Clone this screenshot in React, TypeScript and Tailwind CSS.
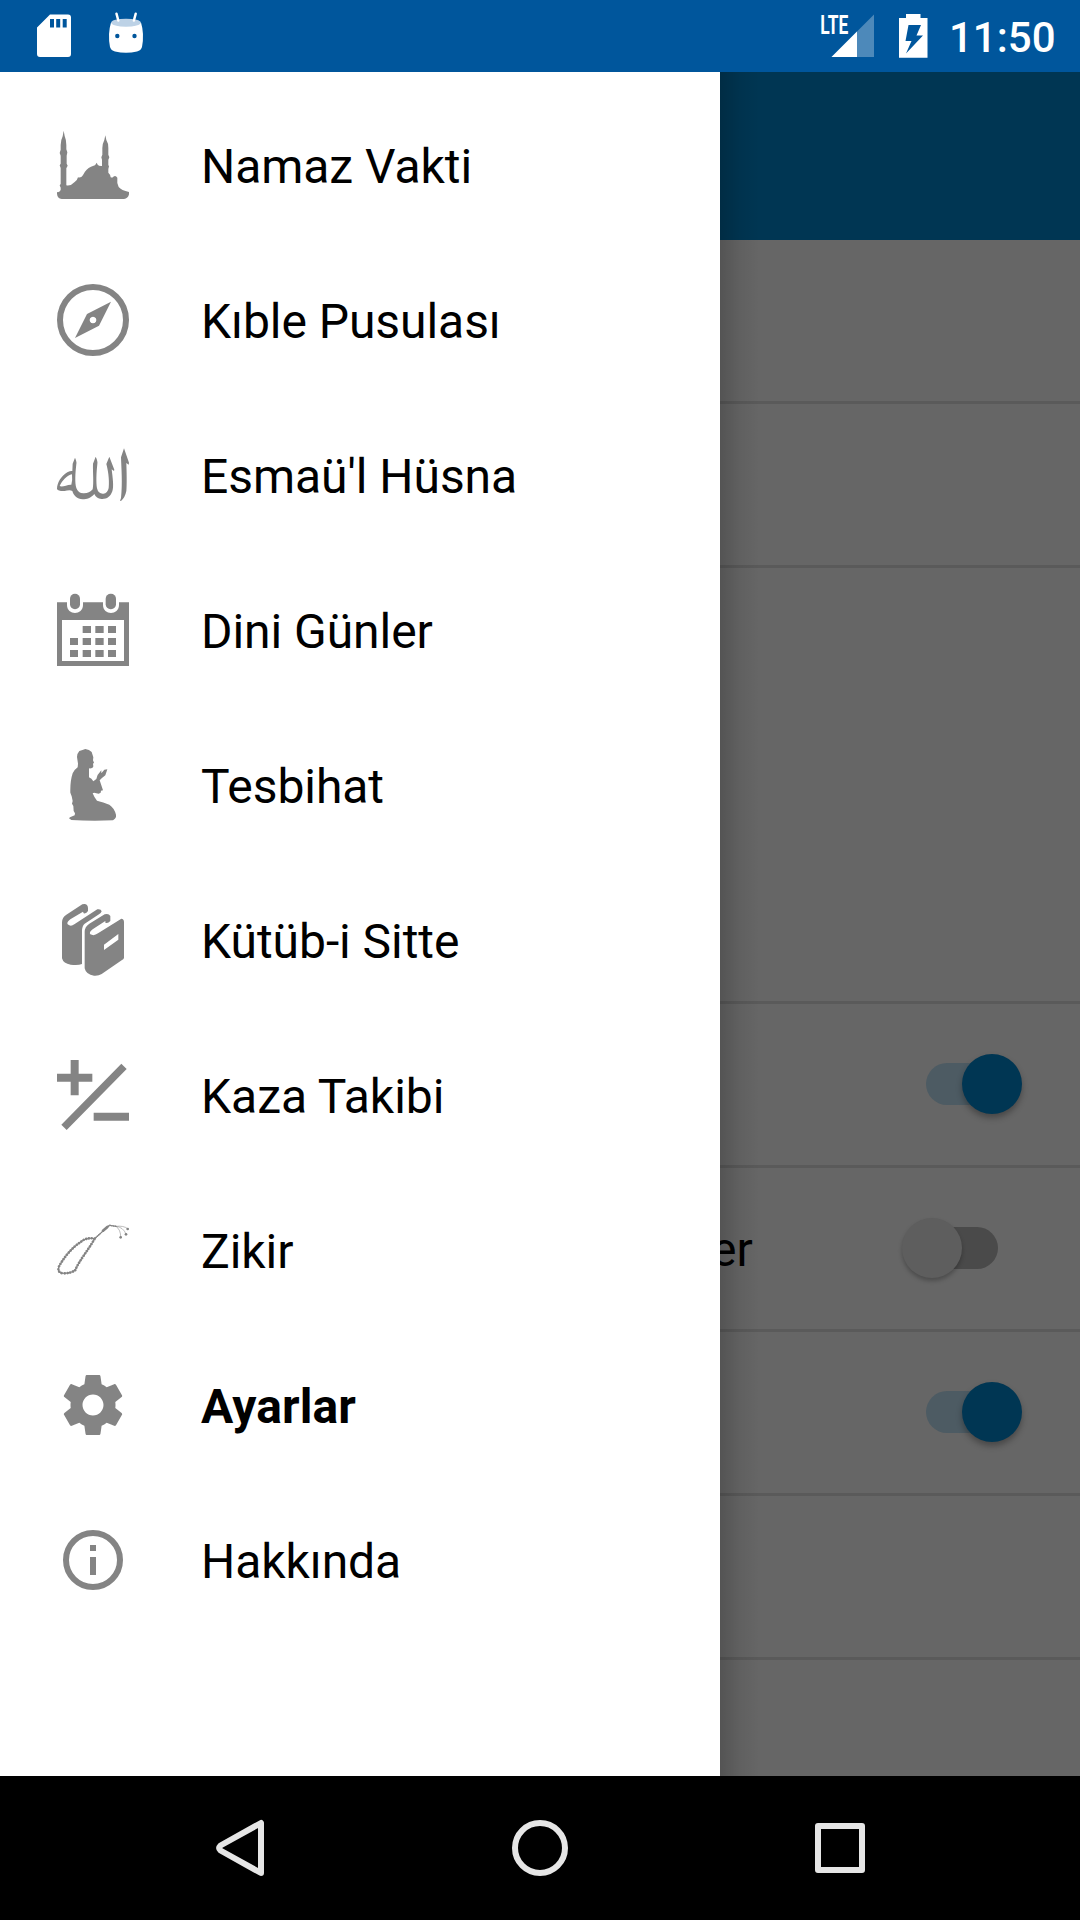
import type { ReactNode } from "react";

const GREY = "#848484";

function Icon({ box, children }: { box: string; children: ReactNode }) {
  return (
    <svg viewBox={box} className="h-[72px] w-[72px] shrink-0 overflow-visible" fill={GREY}>
      {children}
    </svg>
  );
}

const Mosque = () => (
  <Icon box="51 42 216 216">
    <path d="M71 47 L74 63 Q79 75 79 90 V103 L82 112 L80 122 V146 L83 152 L79 160 V211 Q92 214 104 201 Q112 196 114 187 Q124 190 131 177 Q138 162 153 155 Q166 152 167 148 L170 143 L173 149 Q177 154 186 153 V134 L184 127 L187 119 V99 Q188 84 193 75 L196 61 L199 75 Q205 84 205 99 V119 L208 127 L205 134 V150 L207 154 L205 162 V173 Q211 178 212 187 Q217 189 220 185 Q227 180 232 188 Q230 204 236 216 Q244 226 267 231 V238 Q264 251 252 252 H65 Q52 250 51 236 V231 Q59 233 62 225 V218 L59 211 L62 207 V159 L59 151 L62 146 V122 L59 114 L62 104 V90 Q62 76 68 64 Z" />
  </Icon>
);

const Compass = () => (
  <Icon box="51 507 216 216">
    <circle cx="159" cy="615" r="99" fill="none" stroke={GREY} strokeWidth="18" />
    <path fillRule="evenodd" d="M213 560 L177 632 L105 669 L141 597 Z M159 605 a10 10 0 1 0 0.01 0 Z" />
  </Icon>
);

const Calligraphy = () => (
  <Icon box="51 27 216 216">
    <path d="M252 55 L267 98 L266 104 L259 99 C260 125 261 165 259 183 Q255 203 243 213 L240 212 L243 204 C248 160 244 115 243 82 Z" />
    <path d="M208 80 L223 119 L222 123 L215 118 C218 143 222 170 217 184 C211 201 200 208 184 207 Q169 206 163 192 C152 204 141 208 128 208 C111 207 101 197 97 183 C90 179 81 182 74 183 Q55 184 51 177 C51 158 64 138 82 127 Q91 122 97 123 L98 101 L105 83 Q111 97 109 102 C106 129 104 158 109 174 Q115 191 132 190 Q148 190 158 178 C162 157 158 128 159 101 L167 80 Q174 94 172 102 C169 129 168 157 171 175 Q175 192 190 191 Q203 190 206 174 C209 147 203 116 199 102 Z" />
    <path fill="#fff" d="M96 133 Q98 151 94 164 C81 163 67 173 59 168 C66 152 81 136 96 133 Z" />
  </Icon>
);

const Calendar = () => (
  <Icon box="51 492 216 216">
    <path fillRule="evenodd" d="M51 517 H81 V525 C81 557 129 557 129 525 V517 H189 V525 C189 557 237 557 237 525 V517 H267 V708 H51 Z M66 570 V693 H252 V570 Z" />
    <rect x="90" y="491" width="30" height="47" rx="15" />
    <rect x="197" y="491" width="31" height="47" rx="15" />
    <path d="M128 588h25v21h-25z M166 588h25v21h-25z M204 588h24v21h-24z M90 624h24v21H90z M128 624h25v21h-25z M166 624h25v21h-25z M204 624h24v21h-24z M90 660h24v21H90z M128 660h25v21h-25z M166 660h25v21h-25z M204 660h24v21h-24z" />
  </Icon>
);

const Prayer = () => (
  <Icon box="51 42 216 216">
    <path d="M118 48 Q128 45 136 42 Q148 44 155 51 L160 67 L159 76 L162 83 L159 86 L160 94 Q159 101 147 100 V127 Q155 130 160 139 L169 132 Q171 119 177 115 L184 106 V115 L193 104 L202 103 L196 121 L185 130 L179 136 L189 166 L183 167 L182 173 L176 176 L169 175 Q162 171 158 175 Q162 186 171 197 Q190 202 208 209 Q223 219 228 239 V246 Q226 252 219 256 Q154 259 94 255 L87 250 L90 247 L104 241 L105 235 L101 228 L100 213 L96 206 L98 198 L95 184 L91 173 Q90 139 98 115 Q103 104 113 97 L114 86 L111 66 Q112 54 118 48 Z" />
  </Icon>
);

const Books = () => (
  <Icon box="51 507 216 216">
    <path d="M66 562 Q66 547 79 539 L127 508 Q143 504 144 519 V528 Q139 537 131 535 L129 530 L91 553 Q79 562 83 568 Q92 576 103 568 L172 523 Q183 521 185 529 Q183 535 177 538 L134 566 Q126 573 126 588 V687 Q114 692 92 689 Q70 686 66 670 Z" />
    <path fillRule="evenodd" d="M134 591 Q134 575 148 566 L194 538 Q206 534 211 543 V558 Q203 567 196 563 V558 L158 583 Q146 592 151 598 Q162 604 174 595 L244 551 Q252 552 252 561 V669 Q251 673 245 676 L185 717 Q176 723 162 722 Q138 719 134 700 Z M192 629 V645 L235 614 V597 Z" />
  </Icon>
);

const PlusMinus = () => (
  <Icon box="51 42 216 216">
    <path d="M92 45h24v41h41v24h-41v41H92v-41H51V86h41z M244 56 L260 72 L80 255 L64 239 Z M161 203h106v24H161z" />
  </Icon>
);

const Beads = () => (
  <Icon box="51 507 216 216">
    <g fill="none" stroke={GREY} strokeLinecap="round">
      <path strokeWidth="3" d="M164 581 Q139 576 122 591 C96 608 72 636 56 666 Q52 683 69 685 Q94 685 106 675 C118 646 145 615 164 581 L208 541 L228 544" />
      <path strokeWidth="8" strokeDasharray="0.1 8.3" d="M164 581 Q139 576 122 591 C96 608 72 636 56 666 Q52 683 69 685 Q94 685 106 675 C118 646 145 615 164 581" />
      <path strokeWidth="5" strokeDasharray="0.1 5.5" d="M164 581 L208 541 L228 544" />
      <path strokeWidth="8" d="M189 557 L202 546" />
      <path strokeWidth="1.6" d="M228 544 Q251 541 263 551 M228 544 Q250 546 258 567 M228 544 Q243 554 242 577" />
    </g>
    <circle cx="263" cy="552" r="4" />
    <circle cx="258" cy="568" r="4" />
    <circle cx="242" cy="577" r="4" />
  </Icon>
);

const Gear = () => (
  <Icon box="51 27 216 216">
    <path
      transform="translate(51 27) scale(9)"
      d="M19.43 12.98c.04-.32.07-.64.07-.98s-.03-.66-.07-.98l2.11-1.65c.19-.15.24-.42.12-.64l-2-3.46c-.12-.22-.39-.3-.61-.22l-2.49 1c-.52-.4-1.08-.73-1.69-.98l-.38-2.65C14.46 2.18 14.25 2 14 2h-4c-.25 0-.46.18-.49.42l-.38 2.65c-.61.25-1.17.59-1.69.98l-2.49-1c-.23-.09-.49 0-.61.22l-2 3.46c-.13.22-.07.49.12.64l2.11 1.65c-.04.32-.07.65-.07.98s.03.66.07.98l-2.11 1.65c-.19.15-.24.42-.12.64l2 3.46c.12.22.39.3.61.22l2.49-1c.52.4 1.08.73 1.69.98l.38 2.65c.03.24.24.42.49.42h4c.25 0 .46-.18.49-.42l.38-2.65c.61-.25 1.17-.59 1.69-.98l2.49 1c.23.09.49 0 .61-.22l2-3.46c.12-.22.07-.49-.12-.64l-2.11-1.65zM12 15.5c-1.93 0-3.5-1.57-3.5-3.5s1.57-3.5 3.5-3.5 3.5 1.57 3.5 3.5-1.57 3.5-3.5 3.5z"
    />
  </Icon>
);

const Info = () => (
  <Icon box="51 492 216 216">
    <circle cx="159" cy="600" r="81" fill="none" stroke={GREY} strokeWidth="18" />
    <path d="M150 555h18v18h-18z M150 591h18v54h-18z" />
  </Icon>
);

const items = [
  { label: "Namaz Vakti", icon: <Mosque /> },
  { label: "Kıble Pusulası", icon: <Compass /> },
  { label: "Esmaü'l Hüsna", icon: <Calligraphy /> },
  { label: "Dini Günler", icon: <Calendar /> },
  { label: "Tesbihat", icon: <Prayer /> },
  { label: "Kütüb-i Sitte", icon: <Books /> },
  { label: "Kaza Takibi", icon: <PlusMinus /> },
  { label: "Zikir", icon: <Beads /> },
  { label: "Ayarlar", icon: <Gear />, active: true },
  { label: "Hakkında", icon: <Info /> },
];

function StatusBar() {
  return (
    <header className="flex h-[72px] shrink-0 items-start bg-[#00569c]">
      <svg viewBox="0 0 200 72" className="h-[72px] w-[200px]" fill="#fff">
        <path fillRule="evenodd" d="M50 14.5 H68 Q71 14.5 71 17.5 V54 Q71 57 68 57 H40 Q37 57 37 54 V27.5 Z M50 19v8.5h4V19z M56.2 19v8.5h4V19z M62.7 19v8.5h4V19z" />
        <path d="M111 22.5 Q126 29 141 22.5 Q144.500 34 142 47 Q141 50.500 137 51.500 Q126 54 115 51.500 Q111 50.500 110 47 Q107.500 34 111 22.5Z" />
        <ellipse cx="126" cy="22.700" rx="14.800" ry="4" fill="#bdd2e6" />
        <path d="M116.500 13.700 L118.300 20.500 M135.700 13.700 L133.900 20.500" stroke="#fff" strokeWidth="2.500" strokeLinecap="round" />
        <circle cx="117.300" cy="36" r="2.200" fill="#00569c" />
        <circle cx="134.500" cy="36" r="2.200" fill="#00569c" />
      </svg>
      <div className="flex-1" />
      <svg viewBox="800 0 140 72" className="h-[72px] w-[140px]" fill="#fff">
        <path d="M874 14.500 V57 H831.500 Z" fill="#4d89ba" />
        <path d="M857 31.500 V57 H831.500 Z" />
        <text x="820.200" y="33.500" fontFamily="Roboto, sans-serif" fontWeight="700" fontSize="26" textLength="28" lengthAdjust="spacingAndGlyphs">LTE</text>
        <path fillRule="evenodd" d="M906 14 H920.500 V18 H927.500 V57.800 H899 V18 H906 Z M908.500 25 L905.500 41 H911.500 L906 53.500 L923 35.500 H916.500 L921 25 Z" />
      </svg>
      <div className="w-[140px] pt-[13px] pl-[9px] font-medium text-[42px] leading-[50px] text-white">11:50</div>
    </header>
  );
}

function Switch({ on }: { on?: boolean }) {
  return on ? (
    <div className="flex h-[60px] w-[120px] items-center justify-end">
      <div className="h-[42px] w-[60px] rounded-l-full bg-[#4d5b63]" />
      <div className="-ml-[24px] h-[60px] w-[60px] rounded-full bg-[#003653] shadow-[0_4px_6px_rgba(0,0,0,0.3)]" />
    </div>
  ) : (
    <div className="flex h-[60px] w-[120px] items-center">
      <div className="z-10 h-[60px] w-[60px] rounded-full bg-[#5e5e5e] shadow-[0_3px_4px_rgba(0,0,0,0.25)]" />
      <div className="-ml-[24px] h-[42px] w-[60px] rounded-r-full bg-[#4a4a4a]" />
    </div>
  );
}

function SettingRow({ children, tall }: { children?: ReactNode; tall?: boolean }) {
  return (
    <div
      className={
        (tall ? "h-[436px]" : "h-[164px]") +
        " flex shrink-0 items-center justify-end border-b-[3px] border-[#5a5a5a] pr-[58px] pb-px"
      }
    >
      {children}
    </div>
  );
}

export default function App() {
  return (
    <div className="flex h-[1920px] w-[1080px] flex-col overflow-hidden font-['Roboto',sans-serif]">
      <StatusBar />
      <main className="relative h-[1704px] shrink-0 overflow-hidden bg-[#666666] text-black">
        <div className="h-[168px] bg-[#003653]" />
        <SettingRow />
        <SettingRow />
        <SettingRow tall />
        <SettingRow>
          <Switch on />
        </SettingRow>
        <SettingRow>
          <span className="mt-[4px] w-[191px] text-[48px] leading-[56px]">er</span>
          <Switch />
        </SettingRow>
        <SettingRow>
          <Switch on />
        </SettingRow>
        <SettingRow />
        <SettingRow />
        <nav className="absolute inset-y-0 left-0 z-20 w-[720px] bg-white pt-[15px]">
          {items.map((item) => (
            <div key={item.label} className="flex h-[155px] items-start gap-[72px] pt-[42px] pl-[57px]">
              {item.icon}
              <span
                className={
                  (item.active ? "font-bold tracking-[0.12px]" : "font-normal tracking-[-0.05px]") +
                  " pt-[10px] text-[48px] leading-[56px] whitespace-nowrap"
                }
              >
                {item.label}
              </span>
            </div>
          ))}
        </nav>
        <div className="absolute inset-y-0 left-[720px] z-20 w-[40px] bg-linear-to-r from-black/18 via-black/6 to-transparent" />
      </main>
      <footer className="h-[144px] shrink-0 bg-black">
        <svg viewBox="0 1776 1080 144" className="h-[144px] w-[1080px]" fill="none" stroke="#e6e6e6" strokeWidth="6" strokeLinejoin="round">
          <path d="M261 1823 V1873 L220.500 1850.500 Q218 1848 220.500 1845.500 Z" />
          <circle cx="540" cy="1848" r="25" />
          <rect x="818" y="1826" width="44" height="44" />
        </svg>
      </footer>
    </div>
  );
}
